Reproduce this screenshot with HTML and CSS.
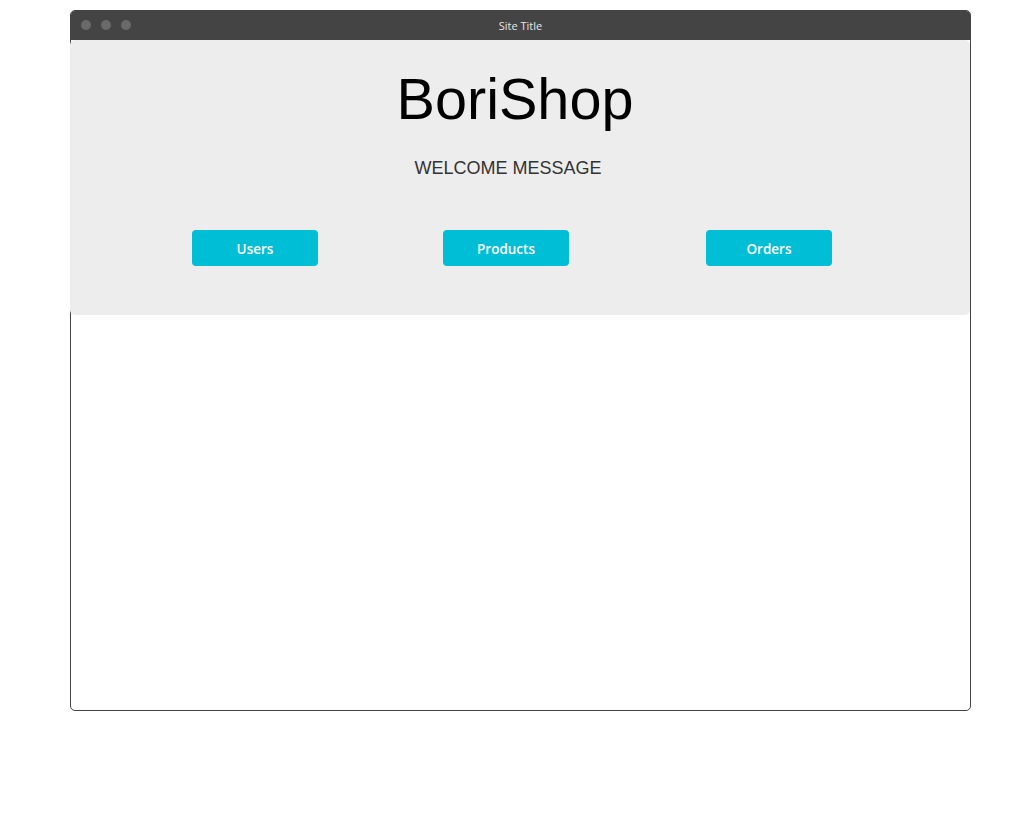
FILE: index.html
```html
<!DOCTYPE html>
<html>
<head>
<meta charset="utf-8">
<link rel="stylesheet" href="styles.css">
</head>
<body>
<div class="window">
  <div class="titlebar">
    <div class="dots"><span class="dot"></span><span class="dot"></span><span class="dot"></span></div>
    <div class="title">Site Title</div>
  </div>
  <div class="panel">
    <h1 class="brand">BoriShop</h1>
    <p class="welcome">WELCOME MESSAGE</p>
    <div class="actions">
      <a class="btn btn-users">Users</a>
      <a class="btn btn-products">Products</a>
      <a class="btn btn-orders">Orders</a>
    </div>
  </div>
</div>
</body>
</html>
```
FILE: styles.css
```css
html, body { margin: 0; padding: 0; background: #fff; }
body { font-family: "Liberation Sans", Arial, sans-serif; }

.window {
  box-sizing: border-box;
  margin: 10px 0 0 70px;
  width: 901px;
  height: 701px;
  border: 1px solid #444;
  border-radius: 5px;
  background: #fff;
}

.titlebar {
  position: relative;
  height: 29px;
  background: #444;
  border-radius: 4px 4px 0 0;
  display: flex;
  align-items: center;
  justify-content: center;
}
.dots {
  position: absolute;
  left: 10px;
  top: 9px;
  display: flex;
  gap: 10px;
}
.dot {
  width: 10px;
  height: 10px;
  border-radius: 50%;
  background: #6a6a6a;
}
.title {
  font-family: "Open Sans", "Noto Sans", sans-serif;
  font-size: 11px;
  color: #e6e6e6;
}

.panel {
  margin-left: -1px;
  width: 900px;
  height: 275px;
  box-sizing: border-box;
  background: #ededed;
  border-radius: 5px;
  padding-top: 26px;
}
.brand {
  margin: 0;
  font-weight: normal;
  font-size: 57.6px;
  line-height: 66px;
  color: #000;
  text-align: center;
  padding-right: 10px;
}
.welcome {
  margin: 26px 0 0;
  font-size: 18px;
  line-height: 21px;
  color: #333;
  text-align: center;
  padding-right: 24px;
}
.actions {
  margin-top: 51px;
  display: flex;
  padding-left: 122px;
}
.btn {
  box-sizing: border-box;
  width: 126px;
  height: 36px;
  padding-top: 1px;
  border-radius: 4px;
  background: #00bed6;
  color: #fff;
  font-family: "Open Sans", "Noto Sans", sans-serif;
  font-weight: 600;
  font-size: 13.5px;
  display: flex;
  align-items: center;
  justify-content: center;
}
.btn-products { margin-left: 125px; }
.btn-orders { margin-left: 137px; }
```
